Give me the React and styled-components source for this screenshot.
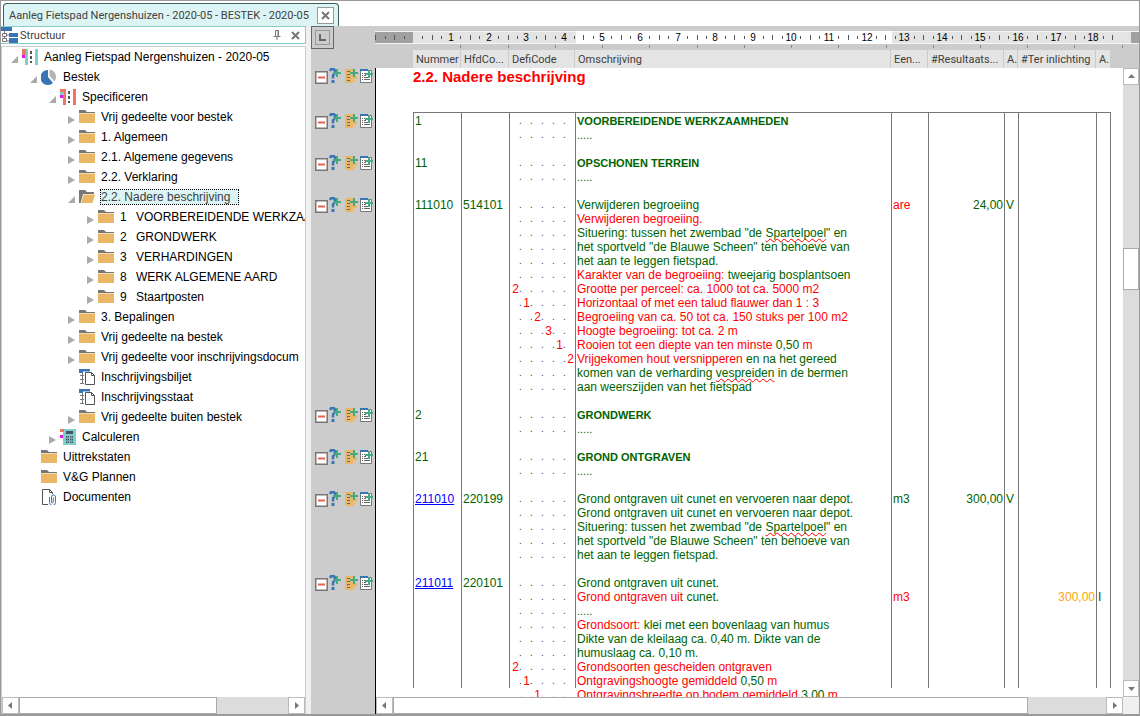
import React, { useState } from 'react';
import styled, { createGlobalStyle, css } from 'styled-components';

const GlobalStyle = createGlobalStyle`
  * {
    box-sizing: border-box;
  }

  body {
    margin: 0;
    font-family: "Liberation Sans", Arial, sans-serif;
    font-size: 12px;
    color: #000;
    background: #fff;
  }

  button {
    padding: 0;
    border: none;
    background: none;
    font: inherit;
  }

  svg {
    display: block;
  }
`;

const colors = { r: '#ff0000', g: '#006400', o: '#ffa500' };
const uiFont = 'Roboto, "Liberation Sans", sans-serif';

/* ---------- window ---------- */

const Window = styled.div`
  display: flex;
  flex-direction: column;
  height: 100vh;
  border: 1px solid #999;
  border-bottom-width: 2px;
  overflow: hidden;
`;

const TabBar = styled.div`
  display: flex;
  flex: none;
  height: 25px;
  padding: 2px 2px 0;
`;

const Tab = styled.div`
  display: flex;
  align-items: center;
  gap: 8px;
  padding: 0 4px 0 5px;
  border: 1px solid #3f5c5c;
  border-bottom: none;
  border-radius: 4px 4px 0 0;
  background: #dcf5f4;
  font-family: ${uiFont};
  font-size: 11px;
  color: #404040;
  white-space: nowrap;
`;

const TabClose = styled.button`
  display: flex;
  align-items: center;
  justify-content: center;
  width: 17px;
  height: 17px;
  border: 1px solid #999;
  background: #fff;
`;

const Body = styled.div`
  display: flex;
  flex: 1;
  min-height: 0;
`;

/* ---------- sidebar ---------- */

const Sidebar = styled.aside`
  display: flex;
  flex: none;
  flex-direction: column;
  gap: 2px;
  width: 305px;
`;

const PanelHeader = styled.header`
  display: flex;
  align-items: center;
  height: 18px;
  padding-right: 1px;
  border: 1px solid #82cfcb;
  border-left: none;
  font-family: ${uiFont};
  font-size: 11px;
  color: #404040;
`;

const PanelTitle = styled.span`
  flex: 1;
  padding-left: 2px;
`;

const PanelButton = styled.button`
  display: flex;
  align-items: center;
  justify-content: center;
  width: 18px;
  height: 16px;
`;

const TreeBox = styled.div`
  display: flex;
  flex: 1;
  flex-direction: column;
  min-height: 0;
  border: 1px solid #ccc;
  border-bottom: none;
`;

const Tree = styled.ul`
  flex: 1;
  margin: 0;
  padding: 0;
  list-style: none;
  overflow: hidden;
`;

const TreeRow = styled.li`
  display: flex;
  align-items: center;
  height: 20px;
  padding-left: ${(p) => p.$level * 19 + 7}px;
  white-space: nowrap;
`;

const Toggle = styled.button`
  flex: none;
  width: 12px;
  height: 16px;
  padding: 5px 0 0 1px;
`;

const IconBox = styled.span`
  flex: none;
  width: 18px;
  padding-left: 1px;
`;

const Label = styled.span`
  margin-left: 4px;
  padding: 1px 2px 1px 1px;

  ${(p) =>
    p.$selected &&
    css`
      padding-right: 9px;
      outline: 1px dotted #000;
      outline-offset: -1px;
      background: #dcf5f4;
      color: #404040;
    `}
`;

const Nr = styled.span`
  display: inline-block;
  width: 16px;
`;

const Splitter = styled.div`
  flex: none;
  width: 5px;
  background: #f0f0f0;
`;

/* ---------- scrollbars ---------- */

const ScrollTrack = styled.div`
  display: flex;
  flex: none;
  flex-direction: ${(p) => (p.$vertical ? 'column' : 'row')};
  width: ${(p) => (p.$vertical ? '16px' : 'auto')};
  height: ${(p) => (p.$vertical ? 'auto' : '17px')};
  background: #dcdcdc;
`;

const ScrollButton = styled.button`
  display: flex;
  flex: none;
  align-items: center;
  justify-content: center;
  width: ${(p) => (p.$vertical ? '16px' : '17px')};
  height: 17px;
  border: 1px solid #bbb;
  background: #fff;
`;

const ScrollSpace = styled.div`
  flex: ${(p) => p.$grow} 0 0px;
`;

const Thumb = styled(ScrollSpace)`
  border: 1px solid #aaa;
  background: #fff;
`;

/* ---------- editor ---------- */

const Editor = styled.main`
  display: flex;
  flex: 1;
  min-width: 0;
  background: #ccc;
`;

const Gutter = styled.div`
  flex: none;
  width: 64px;
  overflow: hidden;
`;

const GutterTop = styled.div`
  height: 42px;
`;

const TabStopButton = styled.button`
  display: flex;
  align-items: center;
  justify-content: center;
  width: 23px;
  height: 23px;
  border: 1px solid #666;
`;

const TabStopFace = styled.span`
  display: flex;
  align-items: center;
  justify-content: center;
  width: 15px;
  height: 15px;
  border: 1px solid #999;
`;

const GutterItem = styled.div`
  display: flex;
  gap: 1px;
  height: ${(p) => (p.$lines ? p.$lines * 14 : 45)}px;
  padding-left: 3px;
`;

const GutterButton = styled.button`
  width: 14px;
  height: 17px;
`;

const Paper = styled.div`
  display: flex;
  flex: 1;
  flex-direction: column;
  min-width: 0;
`;

const RulerRow = styled.div`
  height: 24px;
  padding-top: 5px;
  overflow: hidden;
`;

const ColumnHeader = styled.div`
  height: 18px;
  padding: 0 28px 0 38px;
`;

const PaperMain = styled.div`
  display: flex;
  flex: 1;
  min-height: 0;
  border-left: 1px solid #000;
  background: #fff;
`;

const Sheet = styled.div`
  flex: 1;
  min-width: 0;
  padding: 0 12px 0 37px;
  overflow: hidden;
`;

const Heading = styled.h1`
  height: 44px;
  margin: 0;
  font-size: 15px;
  line-height: 18px;
  color: ${colors.r};
`;

const Bottom = styled.div`
  display: flex;
  flex: none;
  border-left: 1px solid #000;
  background: #f0f0f0;

  > :first-child {
    flex: 1;
  }
`;

const Corner = styled.div`
  width: 16px;
`;

const Table = styled.table`
  width: 100%;
  table-layout: fixed;
  border-collapse: separate;
  border-spacing: 0;
`;

const Th = styled.th`
  height: 18px;
  padding: 2px 0 0 3px;
  border-right: 1px solid #ccc;
  background: #e4e4e4;
  font-family: ${uiFont};
  font-size: 11px;
  font-weight: normal;
  line-height: 16px;
  text-align: left;
  white-space: nowrap;
  color: #404040;
`;

const SpecTable = styled(Table)`
  border-top: 1px solid #777;

  tbody tr:first-child td {
    height: 15px;
    padding-top: 1px;
  }
`;

const Td = styled.td`
  height: 14px;
  padding: 0 1px;
  border-left: 1px solid ${(p) => (p.$open ? 'transparent' : '#777')};
  line-height: 14px;
  text-align: ${(p) => p.$align || 'left'};
  white-space: nowrap;
  color: ${(p) => colors[p.$color || 'g']};

  &:last-child {
    border-right: 1px solid ${(p) => (p.$open ? 'transparent' : '#777')};
  }
`;

const Text = styled.span`
  color: ${(p) => colors[p.$color]};

  ${(p) =>
    p.$bold &&
    css`
      font-size: 11px;
      font-weight: bold;
      line-height: 11px;
    `}
`;

const Dots = styled.span`
  font-size: 11px;
  line-height: 11px;
`;

const Misspelled = styled.span`
  text-decoration: underline wavy ${colors.r} 1px;
  text-underline-offset: 1px;
  text-decoration-skip-ink: none;
`;

const PostLink = styled.a`
  color: #0000ff;
`;

const Code = styled.span`
  display: grid;
  grid-template-columns: repeat(6, 11px);
  height: 14px;
`;

const Slot = styled.span`
  display: flex;
  justify-content: flex-end;
  width: 11px;
  color: ${colors.r};
`;

const SlotDot = styled.span`
  width: 3px;
  font-size: 10px;
  color: #444466;
`;

/* ---------- icons ---------- */

const Folder = () => (
  <svg width="16" height="16" viewBox="0 0 16 16">
    <path d="M0 1h6l2 2h8v1H0z" fill="#777" />
    <path d="M0 4.5h16V14H0z" fill="#e9b765" />
  </svg>
);

const FolderOpen = () => (
  <svg width="17" height="16" viewBox="0 0 17 16">
    <path d="M0 1h6l2 2h7v2H4L1.500 14H0z" fill="#777" />
    <path d="M4.500 5.500H16L13.500 14H2z" fill="#e9b765" />
  </svg>
);

const Road = ({ color, alt }) => (
  <svg width="16" height="16" viewBox="0 0 16 16">
    <path d="M3 0h3v16H3zM13 0h3v16h-3z" fill={color} />
    <path d="M0 0h4v3H0z" fill="#ee7764" />
    <path d="M0 3h4v3H0z" fill={alt} />
    <path d="M0 6h3v3H0z" fill="#e815e8" />
    <path d="M8 2h2v3H8zM8 7h2v3H8zM8 12h2v2H8z" fill="#555" />
  </svg>
);

const Pie = () => (
  <svg width="16" height="16" viewBox="0 0 16 16">
    <path d="M7 1v7l5 6A7.500 7.500 0 1 1 7 1z" fill="#3a74b4" />
    <path d="M8.500 0.500A7.500 7.500 0 0 1 13.500 12.500L8.500 7z" fill="#b5b5b5" />
  </svg>
);

const FormDoc = () => (
  <svg width="16" height="16" viewBox="0 0 16 16" fill="none">
    <path d="M0 0h11v2.500H4V4H0z" fill="#3a74b4" />
    <path d="M3.500 4v11M1 6.500h4M1 10.500h4M1 14.500h4" stroke="#777" />
    <path d="M6.500 3.500h6l3 3v9h-9z" stroke="#555" fill="#fff" />
    <path d="M12.500 3.500v3h3" stroke="#555" />
  </svg>
);

const Calculator = () => (
  <svg width="16" height="16" viewBox="0 0 16 16">
    <path d="M3 0h13v16H3z" fill="#7ed0c8" />
    <path d="M0 0h4v3H0z" fill="#ee7764" />
    <path d="M0 6h3v3H0z" fill="#e815e8" />
    <path d="M6 2h7v3H6zM6 7h1.500v7H6zM8 7h1v7H8zM10 7h1v7h-1zM11.500 7H13v7h-1.500z" fill="#456" />
    <path d="M6 9h7M6 12h7" stroke="#7ed0c8" />
  </svg>
);

const ClipDoc = () => (
  <svg width="16" height="16" viewBox="0 0 16 16" fill="none">
    <path d="M7 15.500H1.500V0.500h7l3 3V5M8.500 0.500v3h3" stroke="#555" />
    <path
      d="M8.500 8v5.500a2.500 2.500 0 0 0 6 0V8a2 2 0 0 0-4 0v5a0.900 0.900 0 0 0 1.800 0V8.500"
      stroke="#3a74b4"
    />
  </svg>
);

const icons = {
  folder: <Folder />,
  open: <FolderOpen />,
  project: <Road color="#7ed0c8" alt="#ee7764" />,
  spec: <Road color="#ee7764" alt="#7ed0c8" />,
  pie: <Pie />,
  form: <FormDoc />,
  calc: <Calculator />,
  docs: <ClipDoc />,
};

const StructureIcon = () => (
  <svg width="17" height="16" viewBox="0 0 17 16">
    <path d="M0 0h11v4H0zM8 6h9v4H8zM8 11h9v5H8z" fill="#3a74b4" />
    <path d="M3.500 4v8M5 8h3M5 14h3" stroke="#777" fill="none" />
    <path d="M1.500 6.500h4v3h-4zM1.500 11.500h4v3h-4z" stroke="#777" fill="#fff" />
  </svg>
);

const Cross = () => (
  <svg width="9" height="9" viewBox="0 0 9 9">
    <path d="M1 1l7 7M8 1L1 8" stroke="#777" strokeWidth="2" />
  </svg>
);

const Pin = () => (
  <svg width="8" height="10" viewBox="0 0 8 10" fill="none" stroke="#777">
    <path d="M2.500 6V0.500h3V6M0.500 6.500h7M4 7v3M5 1v5" />
  </svg>
);

const Arrow = ({ dir }) => {
  const paths = {
    left: 'M6 1v7L2 4.500z',
    right: 'M3 1v7l4-3.500z',
    up: 'M1 6h7L4.500 2z',
    down: 'M1 3h7L4.500 7z',
  };
  return (
    <svg width="9" height="9" viewBox="0 0 9 9">
      <path d={paths[dir]} fill="#777" />
    </svg>
  );
};

const MinusBox = () => (
  <svg width="14" height="17" viewBox="0 0 14 17">
    <path d="M1 3h13v13H1z" fill="#777" />
    <path d="M2.500 4.500h10v10h-10z" fill="#fff" />
    <path d="M4 9.500h7" stroke="#e2614f" strokeWidth="2" />
  </svg>
);

const Plus = ({ x, y }) => (
  <path
    d={`M${x} ${y - 4}v8M${x - 4} ${y}h8`}
    stroke="#43ab84"
    strokeWidth="2"
    shapeRendering="crispEdges"
  />
);

const HelpPlus = () => (
  <svg width="14" height="17" viewBox="0 0 14 17" fill="none">
    <path d="M1 3L2 1.200H5L6 2.500V5L4 7.500V10.500" stroke="#3a74b4" strokeWidth="2.500" />
    <path d="M2.500 12h3v3h-3z" fill="#3a74b4" />
    <Plus x={8} y={5} />
  </svg>
);

const NotePlus = () => (
  <svg width="14" height="17" viewBox="0 0 14 17" fill="none">
    <path d="M1 1h8v7h4v3l-4 4H1z" fill="#e9b765" />
    <path d="M3 3.500h3M3 6.500h3M3 9.500h3M3 12.500h3" stroke="#666" />
    <path d="M9.500 15v-3.500H13" stroke="#ccc" />
    <Plus x={10} y={5} />
  </svg>
);

const ListPlus = () => (
  <svg width="14" height="17" viewBox="0 0 14 17" fill="none">
    <path d="M1.500 2.500h11v12h-11z" fill="#fff" stroke="#777" />
    <path d="M1 1h8v2H1z" fill="#3a74b4" />
    <path d="M3 5.500h1M3 7.500h1M3 9.500h1M3 11.500h1M5 5.500h3M5 7.500h2M5 9.500h6M5 11.500h6" stroke="#666" />
    <Plus x={10} y={6} />
  </svg>
);

/* ---------- data ---------- */

const nodes = [
  { level: 0, state: 'open', icon: 'project', text: 'Aanleg Fietspad Nergenshuizen - 2020-05' },
  { level: 1, state: 'open', icon: 'pie', text: 'Bestek' },
  { level: 2, state: 'open', icon: 'spec', text: 'Specificeren' },
  { level: 3, state: 'closed', icon: 'folder', text: 'Vrij gedeelte voor bestek' },
  { level: 3, state: 'closed', icon: 'folder', text: '1. Algemeen' },
  { level: 3, state: 'closed', icon: 'folder', text: '2.1. Algemene gegevens' },
  { level: 3, state: 'closed', icon: 'folder', text: '2.2. Verklaring' },
  { level: 3, state: 'open', icon: 'open', text: '2.2. Nadere beschrijving' },
  { level: 4, state: 'closed', icon: 'folder', nr: '1', text: 'VOORBEREIDENDE WERKZAAMHEDEN' },
  { level: 4, state: 'closed', icon: 'folder', nr: '2', text: 'GRONDWERK' },
  { level: 4, state: 'closed', icon: 'folder', nr: '3', text: 'VERHARDINGEN' },
  { level: 4, state: 'closed', icon: 'folder', nr: '8', text: 'WERK ALGEMENE AARD' },
  { level: 4, state: 'closed', icon: 'folder', nr: '9', text: 'Staartposten' },
  { level: 3, state: 'closed', icon: 'folder', text: '3. Bepalingen' },
  { level: 3, state: 'closed', icon: 'folder', text: 'Vrij gedeelte na bestek' },
  { level: 3, state: 'closed', icon: 'folder', text: 'Vrij gedeelte voor inschrijvingsdocum' },
  { level: 3, icon: 'form', text: 'Inschrijvingsbiljet' },
  { level: 3, icon: 'form', text: 'Inschrijvingsstaat' },
  { level: 3, state: 'closed', icon: 'folder', text: 'Vrij gedeelte buiten bestek' },
  { level: 2, state: 'closed', icon: 'calc', text: 'Calculeren' },
  { level: 1, icon: 'folder', text: 'Uittrekstaten' },
  { level: 1, icon: 'folder', text: 'V&G Plannen' },
  { level: 1, icon: 'docs', text: 'Documenten' },
];

const columns = [
  { title: 'Nummer', width: 48 },
  { title: 'HfdCo...', width: 48 },
  { title: 'DefiCode', width: 66 },
  { title: 'Omschrijving' },
  { title: 'Een...', width: 37 },
  { title: '#Resultaats...', width: 76 },
  { title: 'A.', width: 14 },
  { title: '#Ter inlichting', width: 78 },
  { title: 'A.', width: 15 },
];

// a line is { d: [slot, digit], t: [color, text, color, text, ...] }
const situering = [
  { t: ['g', 'Situering: tussen het zwembad "de ', 'x', 'Spartelpoel', 'g', '" en'] },
  { t: ['g', 'het sportveld "de Blauwe Scheen" ten behoeve van'] },
  { t: ['g', 'het aan te leggen fietspad.'] },
];

const posts = [
  { nr: '1', lines: [{ bold: true, t: ['g', 'VOORBEREIDENDE WERKZAAMHEDEN'] }, { dots: true }] },
  { nr: '11', lines: [{ bold: true, t: ['g', 'OPSCHONEN TERREIN'] }, { dots: true }] },
  {
    nr: '111010',
    hfd: '514101',
    lines: [
      { t: ['g', 'Verwijderen begroeiing'], unit: 'are', unitColor: 'r', result: '24,00', a: 'V' },
      { t: ['r', 'Verwijderen begroeiing.'] },
      ...situering,
      { t: ['r', 'Karakter van de begroeiing: ', 'g', 'tweejarig bosplantsoen'] },
      { d: [0, 2], t: ['r', 'Grootte per perceel: ca. 1000 tot ca. 5000 m2'] },
      { d: [1, 1], t: ['r', 'Horizontaal of met een talud flauwer dan 1 : 3'] },
      { d: [2, 2], t: ['r', 'Begroeiing van ca. 50 tot ca. 150 stuks per 100 m2'] },
      { d: [3, 3], t: ['r', 'Hoogte begroeiing: tot ca. 2 m'] },
      { d: [4, 1], t: ['r', 'Rooien tot een diepte van ten minste ', 'g', '0,50', 'r', ' m'] },
      { d: [5, 2], t: ['r', 'Vrijgekomen hout versnipperen', 'g', ' en na het gereed'] },
      { t: ['g', 'komen van de verharding ', 'x', 'vespreiden', 'g', ' in de bermen'] },
      { t: ['g', 'aan weerszijden van het fietspad'] },
    ],
  },
  { nr: '2', lines: [{ bold: true, t: ['g', 'GRONDWERK'] }, { dots: true }] },
  { nr: '21', lines: [{ bold: true, t: ['g', 'GROND ONTGRAVEN'] }, { dots: true }] },
  {
    nr: '211010',
    hfd: '220199',
    link: true,
    lines: [
      {
        t: ['g', 'Grond ontgraven uit cunet en vervoeren naar depot.'],
        unit: 'm3',
        result: '300,00',
        a: 'V',
      },
      { t: ['g', 'Grond ontgraven uit cunet en vervoeren naar depot.'] },
      ...situering,
    ],
  },
  {
    nr: '211011',
    hfd: '220101',
    link: true,
    last: true,
    lines: [
      { t: ['g', 'Grond ontgraven uit cunet.'] },
      {
        t: ['r', 'Grond ontgraven uit ', 'g', 'cunet.'],
        unit: 'm3',
        unitColor: 'r',
        info: '300,00',
        ai: 'I',
      },
      { dots: true },
      { t: ['r', 'Grondsoort: ', 'g', 'klei met een bovenlaag van humus'] },
      { t: ['g', 'Dikte van de kleilaag ca. 0,40 m. Dikte van de'] },
      { t: ['g', 'humuslaag ca. 0,10 m.'] },
      { d: [0, 2], t: ['r', 'Grondsoorten gescheiden ontgraven'] },
      { d: [1, 1], t: ['r', 'Ontgravingshoogte gemiddeld ', 'g', '0,50', 'r', ' m'] },
      { d: [2, 1], open: true, t: ['r', 'Ontgravingsbreedte op bodem gemiddeld ', 'g', '3,00', 'r', ' m'] },
    ],
  },
];

/* ---------- components ---------- */

const Scrollbar = ({ vertical, before, thumb, after }) => (
  <ScrollTrack $vertical={vertical}>
    <ScrollButton $vertical={vertical} aria-label={vertical ? 'Omhoog' : 'Naar links'}>
      <Arrow dir={vertical ? 'up' : 'left'} />
    </ScrollButton>
    <ScrollSpace $grow={before} />
    <Thumb $grow={thumb} />
    <ScrollSpace $grow={after} />
    <ScrollButton $vertical={vertical} aria-label={vertical ? 'Omlaag' : 'Naar rechts'}>
      <Arrow dir={vertical ? 'down' : 'right'} />
    </ScrollButton>
  </ScrollTrack>
);

const TreeToggle = ({ state }) => (
  <Toggle aria-label={state === 'open' ? 'Inklappen' : 'Uitklappen'}>
    <svg width="9" height="9" viewBox="0 0 9 9">
      <path d={state === 'open' ? 'M8 1v7H1z' : 'M1 1l7 4-7 4z'} fill="#aaa" />
    </svg>
  </Toggle>
);

const CM = 37.8;
const ORIGIN = 38;

const Ruler = () => {
  const quarters = Array.from({ length: 78 }, (_, i) => i - 3);
  const stops = Array.from({ length: 15 }, (_, i) => i + 1);
  return (
    <svg width="100%" height="19">
      <rect width="100%" height="13" fill="#f4f4f4" />
      <rect y="1" width="100%" height="11" fill="#e4e4e4" />
      <rect y="1" width={ORIGIN} height="11" fill="#a0a0a0" />
      <rect x="201" y="0" width="316" height="13" fill="#fff" />
      <rect x="756" y="1" width="100%" height="11" fill="#a0a0a0" />
      <rect x="0" y="4" width="1" height="5" fill="#555" />
      {quarters.map((q) => {
        const x = Math.round(ORIGIN + (q * CM) / 4);
        if (q === 0 || x > 750) return null;
        if (q > 0 && q % 4 === 0) {
          return (
            <text key={q} x={x} y="10" fontSize="10" textAnchor="middle" fill="#000">
              {q / 4}
            </text>
          );
        }
        const tall = q % 2 === 0;
        return (
          <rect key={q} x={x} y={tall ? 4 : 5} width="1" height={tall ? 5 : 3} fill="#555" />
        );
      })}
      {stops.map((s) => (
        <rect key={s} x={Math.round(ORIGIN + s * CM * 1.25)} y="14" width="1" height="3" fill="#888" />
      ))}
    </svg>
  );
};

const Cols = () => (
  <colgroup>
    {columns.map((c, i) => (
      <col key={i} width={c.width} />
    ))}
  </colgroup>
);

const DefiCode = ({ code }) => (
  <Code>
    {[0, 1, 2, 3, 4, 5].map((i) => (
      <Slot key={i}>
        {code && code[0] === i && code[1]}
        <SlotDot>{i < 5 ? '.' : ''}</SlotDot>
      </Slot>
    ))}
  </Code>
);

const LineText = ({ line }) => {
  if (line.dots) return <Dots>.....</Dots>;
  const parts = [];
  for (let i = 0; i < line.t.length; i += 2) {
    const [color, text] = [line.t[i], line.t[i + 1]];
    parts.push(
      color === 'x' ? (
        <Misspelled key={i}>{text}</Misspelled>
      ) : (
        <Text key={i} $color={color} $bold={line.bold}>
          {text}
        </Text>
      )
    );
  }
  return parts;
};

const PostRows = ({ post }) => {
  const lines = post.last ? post.lines : [...post.lines, null];
  return lines.map((line, i) => {
    if (!line) {
      return (
        <tr key={i}>
          {columns.map((c, j) => (
            <Td key={j} />
          ))}
        </tr>
      );
    }
    const open = line.open;
    return (
      <tr key={i}>
        <Td $open={open}>
          {i === 0 && (post.link ? <PostLink href={`#${post.nr}`}>{post.nr}</PostLink> : post.nr)}
        </Td>
        <Td $open={open}>{i === 0 && post.hfd}</Td>
        <Td $open={open}>
          <DefiCode code={line.d} />
        </Td>
        <Td $open={open}>
          <LineText line={line} />
        </Td>
        <Td $open={open} $color={line.unitColor}>{line.unit}</Td>
        <Td $open={open} $align="right">{line.result}</Td>
        <Td $open={open}>{line.a}</Td>
        <Td $open={open} $align="right" $color="o">{line.info}</Td>
        <Td $open={open}>{line.ai}</Td>
      </tr>
    );
  });
};

const GutterTools = ({ lines }) => (
  <GutterItem $lines={lines}>
    <GutterButton aria-label="Inklappen"><MinusBox /></GutterButton>
    <GutterButton aria-label="Hulp"><HelpPlus /></GutterButton>
    <GutterButton aria-label="Notitie toevoegen"><NotePlus /></GutterButton>
    <GutterButton aria-label="Post toevoegen"><ListPlus /></GutterButton>
  </GutterItem>
);

const App = () => {
  const [selected, setSelected] = useState(7);

  return (
    <Window>
      <GlobalStyle />
      <TabBar>
        <Tab>
          Aanleg Fietspad Nergenshuizen - 2020-05 - BESTEK - 2020-05
          <TabClose aria-label="Sluiten"><Cross /></TabClose>
        </Tab>
      </TabBar>
      <Body>
        <Sidebar>
          <PanelHeader>
            <StructureIcon />
            <PanelTitle>Structuur</PanelTitle>
            <PanelButton aria-label="Vastzetten"><Pin /></PanelButton>
            <PanelButton aria-label="Sluiten"><Cross /></PanelButton>
          </PanelHeader>
          <TreeBox>
            <Tree>
              {nodes.map((n, i) => (
                <TreeRow key={i} $level={n.level} onClick={() => setSelected(i)}>
                  {n.state ? <TreeToggle state={n.state} /> : <Toggle as="span" />}
                  <IconBox>{icons[n.icon]}</IconBox>
                  <Label $selected={i === selected}>
                    {n.nr && <Nr>{n.nr}</Nr>}
                    {n.text}
                  </Label>
                </TreeRow>
              ))}
            </Tree>
            <Scrollbar before={0} thumb={197} after={72} />
          </TreeBox>
        </Sidebar>
        <Splitter />
        <Editor>
          <Gutter>
            <GutterTop>
              <TabStopButton aria-label="Tabstop">
                <TabStopFace>
                  <svg width="7" height="7" viewBox="0 0 7 7">
                    <path d="M1 0v6h6" stroke="#666" strokeWidth="2" fill="none" />
                  </svg>
                </TabStopFace>
              </TabStopButton>
            </GutterTop>
            <GutterTools />
            {posts.map((p) => (
              <GutterTools key={p.nr} lines={p.lines.length + 1} />
            ))}
          </Gutter>
          <Paper>
            <RulerRow><Ruler /></RulerRow>
            <ColumnHeader>
              <Table>
                <Cols />
                <thead>
                  <tr>
                    {columns.map((c, i) => (
                      <Th key={i} scope="col">{c.title}</Th>
                    ))}
                  </tr>
                </thead>
              </Table>
            </ColumnHeader>
            <PaperMain>
              <Sheet>
                <Heading>2.2. Nadere beschrijving</Heading>
                <SpecTable>
                  <Cols />
                  <tbody>
                    {posts.map((p) => (
                      <PostRows key={p.nr} post={p} />
                    ))}
                  </tbody>
                </SpecTable>
              </Sheet>
              <Scrollbar vertical before={164} thumb={40} after={392} />
            </PaperMain>
            <Bottom>
              <Scrollbar before={0} thumb={635} after={78} />
              <Corner />
            </Bottom>
          </Paper>
        </Editor>
      </Body>
    </Window>
  );
};

export default App;
